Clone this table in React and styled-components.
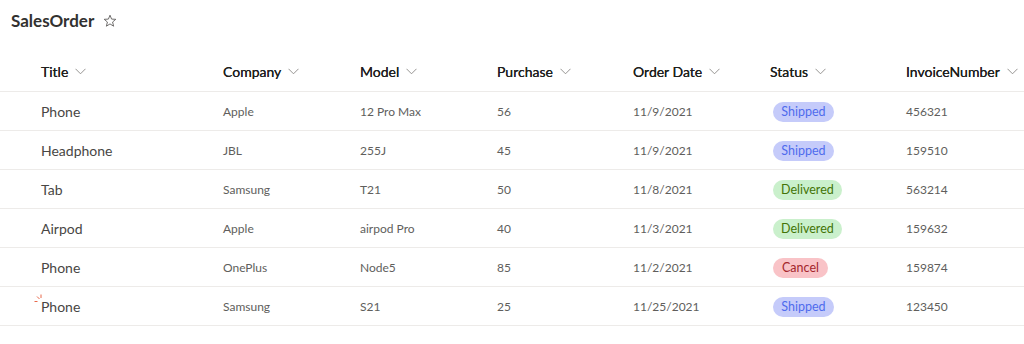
import React from "react";
import styled, { createGlobalStyle } from "styled-components";

const Global = createGlobalStyle`
  html, body { margin: 0; padding: 0; background: #ffffff; }
  body { font-family: Lato, "Open Sans", sans-serif; -webkit-font-smoothing: antialiased; }
`;

const Page = styled.div`
  width: 1024px;
  height: 344px;
  background: #fff;
  overflow: hidden;
`;

const TitleBar = styled.div`
  display: flex;
  align-items: center;
  gap: 9px;
  height: 42px;
  padding: 0 11px;
  margin-bottom: 9px;
`;

const ListTitle = styled.h1`
  margin: 0;
  font-size: 17px;
  font-weight: 700;
  color: #323130;
  line-height: 26px;
`;

const StarButton = styled.span`
  display: inline-flex;
  width: 14px;
  height: 14px;
  color: #605e5c;
`;

const Row = styled.div`
  display: grid;
  grid-template-columns: 182px 137px 137px 136px 137px 136px 1fr;
  align-items: center;
  height: ${(p) => (p.$header ? 40 : 38)}px;
  padding-left: 41px;
  border-bottom: 1px solid #edebe9;
  position: relative;
`;

const HeaderCell = styled.div`
  display: flex;
  align-items: center;
  gap: 7px;
  font-size: 14px;
  font-weight: 400;
  color: #201f1e;
  white-space: nowrap;
  text-shadow: 0 0 0.15px #201f1e;
`;

const Cell = styled.div`
  font-size: ${(p) => (p.$primary ? 14 : 12)}px;
  color: ${(p) => (p.$primary ? "#484644" : "#605e5c")};
  white-space: nowrap;
`;

const palette = {
  Shipped: { bg: "#c5cbfa", fg: "#4f6bed", w: 61 },
  Delivered: { bg: "#caf0cc", fg: "#437406", w: 67 },
  Cancel: { bg: "#f9c3c7", fg: "#a4262c", w: 55 },
};

const Pill = styled.span`
  display: inline-flex;
  align-items: center;
  justify-content: center;
  margin-left: 3px;
  height: 20px;
  min-width: ${(p) => palette[p.$status].w}px;
  box-sizing: border-box;
  padding: 0 8px;
  border-radius: 10px;
  font-size: 12.5px;
  background: ${(p) => palette[p.$status].bg};
  color: ${(p) => palette[p.$status].fg};
`;

const NewMark = styled.svg`
  position: absolute;
  left: 34px;
  top: 7px;
  width: 9px;
  height: 9px;
`;

const Chevron = () => (
  <svg width="11" height="7" viewBox="0 0 11 7" fill="none">
    <path d="M0.5 0.8 L5.5 5.8 L10.5 0.8" stroke="#8a8886" strokeWidth="0.9" />
  </svg>
);

const Star = () => (
  <svg width="14" height="14" viewBox="0 0 14 14" fill="none">
    <path
      d="M7 1.2 L8.6 5.1 L12.8 5.3 L9.6 8 L10.6 12.2 L7 9.9 L3.4 12.2 L4.4 8 L1.2 5.3 L5.4 5.1 Z"
      stroke="#605e5c"
      strokeWidth="0.9"
      strokeLinejoin="round"
    />
  </svg>
);

const columns = ["Title", "Company", "Model", "Purchase", "Order Date", "Status", "InvoiceNumber"];

const rows = [
  ["Phone", "Apple", "12 Pro Max", "56", "11/9/2021", "Shipped", "456321"],
  ["Headphone", "JBL", "255J", "45", "11/9/2021", "Shipped", "159510"],
  ["Tab", "Samsung", "T21", "50", "11/8/2021", "Delivered", "563214"],
  ["Airpod", "Apple", "airpod Pro", "40", "11/3/2021", "Delivered", "159632"],
  ["Phone", "OnePlus", "Node5", "85", "11/2/2021", "Cancel", "159874"],
  ["Phone", "Samsung", "S21", "25", "11/25/2021", "Shipped", "123450", true],
];

export default function App() {
  return (
    <Page>
      <Global />
      <TitleBar>
        <ListTitle>SalesOrder</ListTitle>
        <StarButton>
          <Star />
        </StarButton>
      </TitleBar>
      <Row $header>
        {columns.map((c) => (
          <HeaderCell key={c}>
            {c}
            <Chevron />
          </HeaderCell>
        ))}
      </Row>
      {rows.map((r, i) => (
        <Row key={i}>
          {r[7] && (
            <NewMark viewBox="0 0 9 9">
              <path d="M0.5 7.5 H3.5 M3 2.5 L5.5 5 M7 0.5 V4" stroke="#e8684a" strokeWidth="1" />
            </NewMark>
          )}
          <Cell $primary>{r[0]}</Cell>
          <Cell>{r[1]}</Cell>
          <Cell>{r[2]}</Cell>
          <Cell>{r[3]}</Cell>
          <Cell>{r[4]}</Cell>
          <div>
            <Pill $status={r[5]}>{r[5]}</Pill>
          </div>
          <Cell>{r[6]}</Cell>
        </Row>
      ))}
    </Page>
  );
}
